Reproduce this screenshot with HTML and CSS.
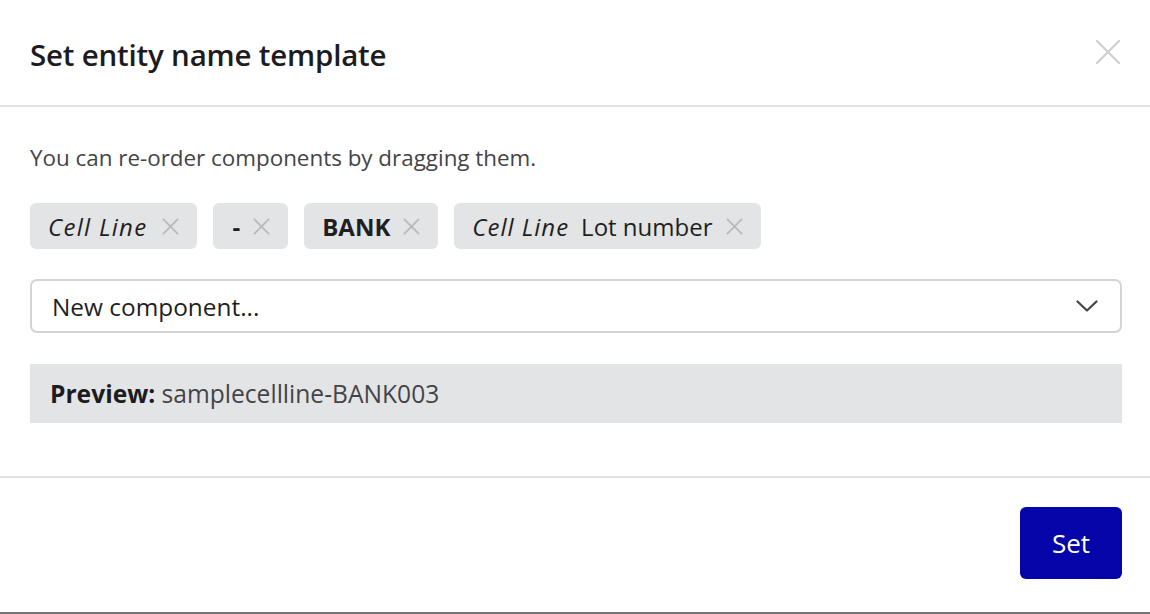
FILE: index.html
```html
<!DOCTYPE html>
<html>
<head>
<meta charset="utf-8">
<link rel="stylesheet" href="styles.css">
</head>
<body>
<div class="modal">
  <header class="modal-header">
    <h1 class="title">Set entity name template</h1>
    <button class="close" aria-label="Close">
      <svg width="26" height="26" viewBox="0 0 26 26"><path d="M2 2 L24 24 M24 2 L2 24" stroke="#cfcfcf" stroke-width="2.2" stroke-linecap="round" fill="none"/></svg>
    </button>
  </header>
  <section class="modal-body">
    <p class="hint">You can re-order components by dragging them.</p>
    <div class="chips">
      <span class="chip"><span class="it it-wide">Cell Line</span><svg class="x x-wide" viewBox="0 0 18 18"><path d="M1 1 L17 17 M17 1 L1 17"/></svg></span>
      <span class="chip"><span class="b dash">-</span><svg class="x" viewBox="0 0 18 18"><path d="M1 1 L17 17 M17 1 L1 17"/></svg></span>
      <span class="chip"><span class="b">BANK</span><svg class="x" viewBox="0 0 18 18"><path d="M1 1 L17 17 M17 1 L1 17"/></svg></span>
      <span class="chip"><span class="it">Cell Line</span><span class="plain">Lot number</span><svg class="x" viewBox="0 0 18 18"><path d="M1 1 L17 17 M17 1 L1 17"/></svg></span>
    </div>
    <div class="select">
      <span>New component...</span>
      <svg class="chev" width="22" height="12" viewBox="0 0 22 12"><path d="M1.5 1.5 L11 10.5 L20.5 1.5" stroke="#444" stroke-width="2.2" fill="none" stroke-linecap="round" stroke-linejoin="round"/></svg>
    </div>
    <div class="preview"><strong>Preview:</strong> samplecellline-BANK003</div>
  </section>
  <footer class="modal-footer">
    <button class="btn-set">Set</button>
  </footer>
</div>
</body>
</html>
```

FILE: styles.css
```css
* { box-sizing: border-box; }
html, body { margin: 0; padding: 0; background: #fff; }
body {
  font-family: "Open Sans", "Liberation Sans", sans-serif;
  color: #1f1f22;
  width: 1150px;
  height: 614px;
  overflow: hidden;
}
.modal {
  height: 614px;
  display: flex;
  flex-direction: column;
  border-bottom: 2px solid #767676;
}
.modal-header {
  height: 107px;
  border-bottom: 2px solid #e2e2e2;
  display: flex;
  align-items: center;
  justify-content: space-between;
  padding: 0 28px 0 30px;
}
.title {
  margin: 0;
  font-size: 29.5px;
  font-weight: 600;
  color: #1c1c20;
  position: relative;
  top: 2px;
  letter-spacing: -0.2px;
}
.close {
  border: 0;
  background: none;
  padding: 0;
  width: 26px;
  height: 26px;
  position: relative;
  top: -1px;
  left: -1px;
}
.modal-body {
  padding: 0 28px 0 30px;
  border-bottom: 2px solid #e2e2e2;
  height: 371px;
}
.hint {
  margin: 0;
  padding-top: 38px;
  font-size: 22.4px;
  color: #444448;
  line-height: 26px;
}
.chips {
  display: flex;
  gap: 16px;
  margin-top: 32px;
}
.chip {
  height: 46px;
  background: #e3e4e6;
  border-radius: 6px;
  display: flex;
  align-items: center;
  padding: 0 18px 0 18px;
  font-size: 24px;
  color: #1f1f22;
}
.chip .it { font-style: italic; letter-spacing: 1px; }
.chip .it-wide { letter-spacing: 1.3px; }
.chip .b { font-weight: 700; }
.chip .dash { padding-left: 1px; }
.chip .plain { margin-left: 12px; }
.chip .x {
  width: 17px;
  height: 17px;
  margin-left: 13px;
  stroke: #b9b9bb;
  stroke-width: 1.8;
  fill: none;
}
.chip .x-wide { margin-left: 15px; }
.select {
  margin-top: 30px;
  height: 54px;
  border: 2px solid #d4d4d6;
  border-radius: 7px;
  display: flex;
  align-items: center;
  justify-content: space-between;
  padding: 0 22px 0 20px;
  font-size: 24.4px;
  color: #1f1f22;
}
.preview {
  margin-top: 31px;
  height: 59px;
  background: #e3e4e6;
  display: flex;
  align-items: center;
  padding: 0 20px;
  font-size: 24.6px;
  color: #444448;
  white-space: pre;
}
.preview strong { color: #1c1c20; font-weight: 700; }
.modal-footer {
  flex: 1;
  display: flex;
  justify-content: flex-end;
  padding: 29px 28px 0 30px;
}
.btn-set {
  width: 102px;
  height: 72px;
  border: 0;
  border-radius: 6px;
  background: #0505a9;
  color: #fff;
  font-family: inherit;
  font-size: 26px;
  font-weight: 400;
}
```
